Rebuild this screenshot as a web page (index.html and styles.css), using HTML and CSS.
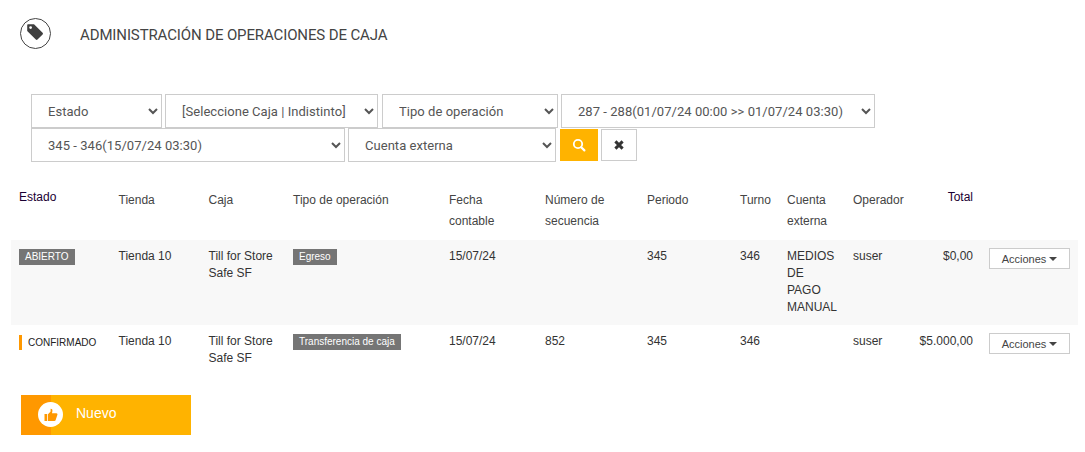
FILE: index.html
```html
<!DOCTYPE html>
<html lang="es">
<head>
<meta charset="utf-8">
<title>Administración de operaciones de caja</title>
<link rel="stylesheet" href="styles.css">
</head>
<body>
<header class="head">
  <span class="head-icon">
    <svg viewBox="0 0 20 20" width="20" height="20"><path fill="#3f3f3f" fill-rule="evenodd" d="M2.2 3.2C2.2 2.6 2.6 2.2 3.2 2.2H9L17.6 10.8C18.1 11.3 18.1 12 17.6 12.5L12.5 17.6C12 18.1 11.3 18.1 10.8 17.6L2.2 9ZM5.6 4.2A1.4 1.4 0 1 0 5.6 7A1.4 1.4 0 1 0 5.6 4.2Z"/></svg>
  </span>
  <h1 class="title">ADMINISTRACIÓN DE OPERACIONES DE CAJA</h1>
</header>
<form class="filters">
  <select class="sel w-estado"><option>Estado</option></select>
  <select class="sel w-caja"><option>[Seleccione Caja | Indistinto]</option></select>
  <select class="sel w-tipo"><option>Tipo de operación</option></select>
  <select class="sel w-desde"><option>287 - 288(01/07/24 00:00 &gt;&gt; 01/07/24 03:30)</option></select>
  <select class="sel w-hasta"><option>345 - 346(15/07/24 03:30)</option></select>
  <select class="sel w-cuenta"><option>Cuenta externa</option></select>
  <button type="button" class="btn-search" aria-label="Buscar">
    <svg viewBox="0 0 14 14" width="14" height="14"><circle cx="6" cy="6" r="4.2" fill="none" stroke="#fff" stroke-width="1.8"/><path d="M9.2 9.2L12.4 12.4" stroke="#fff" stroke-width="2.2" stroke-linecap="round"/></svg>
  </button>
  <button type="button" class="btn-clear" aria-label="Limpiar">
    <svg viewBox="0 0 10 10" width="10" height="10"><path d="M1.4 1.4L8.6 8.6M8.6 1.4L1.4 8.6" stroke="#333" stroke-width="3"/></svg>
  </button>
</form>
<table class="grid">
  <thead>
    <tr>
      <th class="c-estado strong">Estado</th>
      <th class="c-tienda">Tienda</th>
      <th class="c-caja">Caja</th>
      <th class="c-tipo">Tipo de operación</th>
      <th class="c-fecha">Fecha contable</th>
      <th class="c-num">Número de secuencia</th>
      <th class="c-per">Periodo</th>
      <th class="c-turno">Turno</th>
      <th class="c-cuenta">Cuenta externa</th>
      <th class="c-op">Operador</th>
      <th class="c-total strong">Total</th>
      <th class="c-acc"></th>
    </tr>
  </thead>
  <tbody>
    <tr class="odd">
      <td><span class="tag">ABIERTO</span></td>
      <td>Tienda 10</td>
      <td>Till for Store Safe SF</td>
      <td><span class="tag">Egreso</span></td>
      <td>15/07/24</td>
      <td></td>
      <td>345</td>
      <td>346</td>
      <td>MEDIOS DE PAGO MANUAL</td>
      <td>suser</td>
      <td class="num">$0,00</td>
      <td><button type="button" class="btn-acc">Acciones<i class="caret"></i></button></td>
    </tr>
    <tr>
      <td><span class="state-conf">CONFIRMADO</span></td>
      <td>Tienda 10</td>
      <td>Till for Store Safe SF</td>
      <td><span class="tag">Transferencia de caja</span></td>
      <td>15/07/24</td>
      <td>852</td>
      <td>345</td>
      <td>346</td>
      <td></td>
      <td>suser</td>
      <td class="num">$5.000,00</td>
      <td><button type="button" class="btn-acc">Acciones<i class="caret"></i></button></td>
    </tr>
  </tbody>
</table>
<button type="button" class="btn-new">
  <span class="new-side"><span class="new-dot">
    <svg viewBox="0 0 14 14" width="14" height="14"><path fill="#ff9800" d="M0.5 6H3.2V13H0.5ZM4 6.2L6.6 3.4V0.8C7.9 0.7 8.6 1.6 8.4 2.9L8 5.2H12.4C13.3 5.2 13.7 6 13.4 6.7L11.6 12.2C11.4 12.8 11 13 10.4 13H4Z"/></svg>
  </span></span>
  <span class="new-label">Nuevo</span>
</button>
</body>
</html>
```

FILE: styles.css
```css
html, body { margin: 0; padding: 0; background: #fff; }
body {
  width: 1085px;
  height: 452px;
  overflow: hidden;
  font-family: "Liberation Sans", Arial, sans-serif;
  font-size: 12px;
  color: #333;
}
.head {
  display: flex;
  align-items: center;
  padding: 18px 0 0 20px;
  height: 31px;
}
.head-icon {
  box-sizing: border-box;
  width: 31px;
  height: 31px;
  border: 1px solid #444;
  border-radius: 50%;
  display: flex;
  align-items: center;
  justify-content: center;
  padding: 0 2px 3px 0;
}
.title {
  margin: 2px 0 0 29px;
  font: 400 15px "Roboto", sans-serif;
  color: #444;
  letter-spacing: -0.12px;
}
.filters {
  display: flex;
  flex-wrap: wrap;
  width: 850px;
  margin: 45px 0 0 31px;
  column-gap: 3px;
  align-items: center;
}
.sel {
  box-sizing: border-box;
  height: 34px;
  padding: 0 8px 0 12px;
  border: 1px solid #ccc;
  border-radius: 0;
  background: #fff;
  color: #555;
  font: 400 13px "Roboto", sans-serif;
  letter-spacing: 0.04px;
}
.w-estado { width: 131px; }
.w-caja { width: 213px; }
.w-tipo { width: 176px; margin-left: 1px; }
.w-desde { width: 314px; }
.w-hasta { width: 314px; }
.w-cuenta { width: 208px; }
.btn-search {
  width: 38px;
  height: 32px;
  margin-left: 1px;
  border: 0;
  padding: 0;
  background: #ffb300;
  display: flex;
  align-items: center;
  justify-content: center;
}
.btn-clear {
  box-sizing: border-box;
  width: 36px;
  height: 32px;
  border: 1px solid #ccc;
  padding: 0;
  background: #fff;
  display: flex;
  align-items: center;
  justify-content: center;
}
.grid {
  table-layout: fixed;
  border-collapse: collapse;
  width: 1067px;
  margin: 20px 0 0 11px;
}
.grid th {
  font-weight: 400;
  text-align: left;
  vertical-align: top;
  padding: 8px;
  line-height: 21px;
  height: 40px;
  color: #444;
}
.grid th.strong { color: #1a0033; padding-top: 5px; }
.grid td {
  vertical-align: top;
  padding: 8px 8px 9px;
  line-height: 17px;
  color: #333;
}
.odd td { background: #f8f8f8; }
.grid td.num, .grid th.c-total { text-align: right; }
.c-estado { width: 83.5px; }
.c-tienda { width: 74px; }
.c-caja { width: 68.5px; }
.c-tipo { width: 140px; }
.c-fecha { width: 80px; }
.c-num { width: 86px; }
.c-per { width: 77px; }
.c-turno { width: 31px; }
.c-cuenta { width: 50px; }
.c-op { width: 50px; }
.c-total { width: 54px; }
.c-acc { width: 81px; }
.tag {
  display: inline-block;
  padding: 0 6px;
  height: 16px;
  line-height: 16px;
  background: #757575;
  color: #fff;
  font-size: 10px;
  vertical-align: top;
  white-space: nowrap;
  margin-top: 1px;
}
.state-conf {
  display: inline-block;
  border-left: 3px solid #ff9800;
  padding-left: 6px;
  height: 15px;
  line-height: 15px;
  font-size: 10px;
  color: #222;
  margin-top: 2px;
  white-space: nowrap;
}
.btn-acc {
  box-sizing: border-box;
  width: 81px;
  height: 21px;
  border: 1px solid #ccc;
  background: #fff;
  padding: 0;
  font: 400 11px "Liberation Sans", Arial, sans-serif;
  color: #444;
  display: block;
}
.caret {
  display: inline-block;
  width: 0;
  height: 0;
  margin-left: 3px;
  vertical-align: 2px;
  border-top: 4px solid #444;
  border-left: 4px solid transparent;
  border-right: 4px solid transparent;
}
.btn-new {
  display: flex;
  width: 170px;
  height: 40px;
  margin: 19px 0 0 21px;
  padding: 0;
  border: 0;
  background: #ffb300;
  color: #fff;
  font: 400 14px "Liberation Sans", Arial, sans-serif;
}
.new-side {
  box-sizing: border-box;
  width: 30px;
  height: 40px;
  background: #ff9800;
  position: relative;
}
.new-dot {
  position: absolute;
  left: 17px;
  top: 7px;
  width: 25px;
  height: 25px;
  border-radius: 50%;
  background: #fff;
  display: flex;
  align-items: center;
  justify-content: center;
}
.new-label {
  margin: 10px 0 0 25px;
  line-height: 16px;
}
```
